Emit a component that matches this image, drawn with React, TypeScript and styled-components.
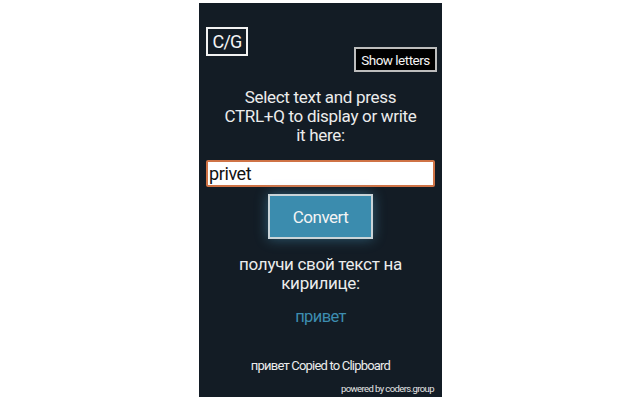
import styled, { createGlobalStyle } from 'styled-components';

const GlobalStyle = createGlobalStyle`
  html, body {
    margin: 0;
    padding: 0;
    background: #ffffff;
  }
  body {
    font-family: Roboto, "Liberation Sans", sans-serif;
  }
`;

const App = () => {
  return (
    <>
      <GlobalStyle />
      <Page>
        <Popup>
          <TopRow>
            <Logo>C/G</Logo>
            <ShowButton>Show letters</ShowButton>
          </TopRow>
          <Hint>
            Select text and press
            <br />
            CTRL+Q to display or write
            <br />
            it here:
          </Hint>
          <TextInput defaultValue="privet" />
          <ConvertButton>Convert</ConvertButton>
          <Hint>
            получи свой текст на
            <br />
            кирилице:
          </Hint>
          <Result>привет</Result>
          <Copied>привет Copied to Clipboard</Copied>
          <Powered>powered by coders.group</Powered>
        </Popup>
      </Page>
    </>
  );
};

export default App;

const Page = styled.div`
  width: 640px;
  height: 400px;
  display: flex;
  justify-content: center;
  padding-top: 3px;
  box-sizing: border-box;
`;

const Popup = styled.div`
  width: 243px;
  height: 394px;
  margin-left: 1px;
  background-color: #131c25;
  color: #ececec;
  display: flex;
  flex-direction: column;
  align-items: center;
  padding: 0 7px;
  box-sizing: border-box;
`;

const TopRow = styled.div`
  width: 100%;
  display: flex;
  justify-content: space-between;
  align-items: flex-start;
  margin-top: 24px;
`;

const Logo = styled.div`
  width: 42px;
  height: 29px;
  box-sizing: border-box;
  border: 2px solid #f2f2f2;
  display: flex;
  align-items: center;
  justify-content: center;
  font-size: 18px;
  letter-spacing: -0.8px;
  color: #f4f4f4;
`;

const ShowButton = styled.button`
  margin-top: 20px;
  margin-right: -2px;
  width: 83px;
  height: 25px;
  box-sizing: border-box;
  padding: 0;
  background: #000000;
  border: 2px solid #bdbdbd;
  color: #f4f4f4;
  font-family: Roboto, "Liberation Sans", sans-serif;
  font-size: 13.5px;
  letter-spacing: -0.5px;
`;

const Hint = styled.div`
  margin-top: 16px;
  text-align: center;
  font-size: 17px;
  line-height: 19px;
  letter-spacing: -0.3px;
  color: #ececec;
`;

const TextInput = styled.input`
  margin-top: 15px;
  width: 229px;
  height: 27px;
  box-sizing: border-box;
  border: 2px solid #cf7346;
  border-radius: 2px;
  padding: 0 1px;
  background: #ffffff;
  color: #111111;
  font-family: Roboto, "Liberation Sans", sans-serif;
  font-size: 18px;
  letter-spacing: -0.4px;
  outline: none;
`;

const ConvertButton = styled.button`
  margin-top: 7px;
  width: 105px;
  height: 45px;
  box-sizing: border-box;
  background: #3b8cae;
  border: 2px solid #c9d4d8;
  color: #f4f4f4;
  font-family: Roboto, "Liberation Sans", sans-serif;
  font-size: 17px;
  letter-spacing: -0.5px;
  box-shadow: 0 0 12px rgba(80, 170, 210, 0.45);
`;

const Result = styled.div`
  margin-top: 14px;
  font-size: 16.5px;
  letter-spacing: -0.6px;
  color: #3d8db0;
`;

const Copied = styled.div`
  margin-top: 32px;
  font-size: 13px;
  letter-spacing: -0.8px;
  color: #ececec;
`;

const Powered = styled.div`
  margin-top: auto;
  margin-bottom: 3px;
  margin-right: 1px;
  align-self: flex-end;
  font-size: 9.5px;
  letter-spacing: -0.6px;
  color: #e6e6e6;
`;
